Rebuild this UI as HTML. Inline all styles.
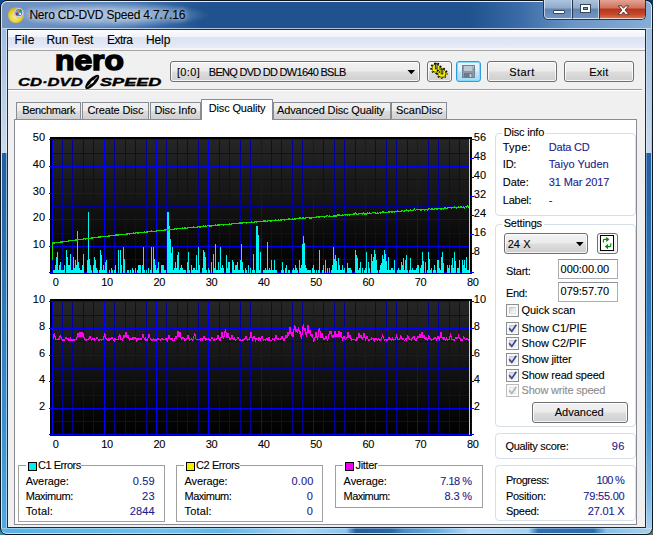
<!DOCTYPE html>
<html><head><meta charset="utf-8"><title>Nero CD-DVD Speed 4.7.7.16</title>
<style>
html,body{margin:0;padding:0;background:#000;}
body{width:653px;height:535px;overflow:hidden;position:relative;font-family:"Liberation Sans",sans-serif;}
#win{position:absolute;left:0;top:0;width:653px;height:535px;overflow:hidden;}
#win div,#win span.t,.abs{position:absolute;}
.t{white-space:nowrap;-webkit-text-stroke:0.1px currentColor;}
#frame{left:0;top:0;width:653px;height:535px;box-sizing:border-box;border:1px solid #10151c;border-radius:7px;background:#20528c;}
#titlebar{left:1px;top:1px;width:651px;height:28px;border-radius:6px 6px 0 0;box-sizing:border-box;border-top:1px solid #e4ecf6;border-left:1px solid #dce6f2;border-right:1px solid #dce6f2;border-bottom:1px solid rgba(225,236,248,0.75);
 background:linear-gradient(90deg,#7394c0 0%,#6a90c2 6%,#4a7ab6 20%,#2c5f9e 27%,#1f528e 31%,#1f528e 72%,#3b6ca8 80%,#6a95c6 88%,#86add6 100%);}
#fl{left:1px;top:29px;width:6px;height:499px;border-left:1px solid #d6e4f3;border-right:1px solid rgba(255,255,255,0.5);box-sizing:border-box;background:linear-gradient(180deg,#9cbde2 0px,#b4cde8 60px,#c9daee 124px,#2160a4 124px,#2464a8 160px,#2f80c0 300px,#3a92d0 400px,#4eaae2 499px);}
#fr{left:646px;top:29px;width:6px;height:499px;border-right:1px solid #a8cbea;border-left:1px solid rgba(255,255,255,0.3);box-sizing:border-box;background:linear-gradient(180deg,#9cbde2 0px,#b4cde8 60px,#c9daee 124px,#2160a4 124px,#2464a8 160px,#2f7cc0 300px,#4a98d4 400px,#7cbae8 470px,#a6cfec 499px);}
#fb{left:1px;top:528px;width:651px;height:6px;border-radius:0 0 6px 6px;border-bottom:1px solid #c4e2f6;border-top:1px solid rgba(255,255,255,0.35);box-sizing:border-box;background:linear-gradient(90deg,#58b2e6 0%,#6fc0ec 25%,#62b6e8 34%,#a6d6f4 46%,#8cc6ee 53%,#24609f 54.5%,#2a68a8 60%,#4a90c8 62%,#6aaee0 67%,#b4daf6 72%,#a4d2f2 81%,#2e70b4 82.5%,#2a6cb0 91%,#86c2ec 93%,#a8d0ec 100%);}
#client{left:7px;top:29px;width:639px;height:499px;box-sizing:border-box;border:1px solid #1c2c44;background:#f0f0f0;}
#menubar{left:8px;top:30px;width:637px;height:21px;background:linear-gradient(180deg,#fbfcfe 0px,#f1f3fa 7px,#dde3f3 7.5px,#e2e7f5 14px,#e9edf8 18px,#f3f5fb 18.5px,#f3f5fb 20px,#a4a4a4 20px,#a4a4a4 21px);}
#capbtns{left:543px;top:0px;width:103px;height:20px;box-sizing:border-box;border:1px solid #2a3444;border-top:none;border-radius:0 0 5px 5px;overflow:hidden;}
#capbtns div{top:0;height:19px;box-sizing:border-box;border:1px solid rgba(255,255,255,0.55);border-top:none;}
#bmin{left:0;width:28px;border-radius:0 0 0 4px;background:linear-gradient(180deg,#aec3dc 0%,#8eaacd 45%,#5f84b2 50%,#7296c2 100%);}
#bmax{left:28px;width:27px;background:linear-gradient(180deg,#aec3dc 0%,#8eaacd 45%,#5f84b2 50%,#7296c2 100%);border-left:1px solid #2a3444 !important;}
#bclose{left:55px;width:47px;border-radius:0 0 4px 0;background:linear-gradient(180deg,#e3a394 0%,#d0705c 45%,#b8341c 50%,#c44a2c 80%,#d8704c 100%);border-left:1px solid #2a3444 !important;}
#bmin i{position:absolute;left:8px;top:10px;width:10px;height:2px;background:#fff;border:1px solid #3a4656;border-radius:1px;}
#bmax i{position:absolute;left:7.5px;top:5px;width:5px;height:3px;border:2.5px solid #fff;outline:1px solid #3a4656;box-shadow:inset 0 0 0 1px #3a4656;}
.btn{box-sizing:border-box;border:1px solid #707070;border-radius:3px;background:linear-gradient(180deg,#f2f2f2 0%,#ebebeb 48%,#dddddd 52%,#cfcfcf 100%);box-shadow:inset 0 0 0 1px rgba(255,255,255,0.8);}
.btn.hot{border-color:#2f9bd8;background:linear-gradient(180deg,#eaf6fd 0%,#d9f0fc 48%,#bee6fd 52%,#a7d9f5 100%);box-shadow:inset 0 0 0 1px #7fdcfb;}
.tab{box-sizing:border-box;border:1px solid #898c95;border-bottom:none;background:linear-gradient(180deg,#f2f2f2 0%,#ebebeb 50%,#dddddd 52%,#cfcfcf 100%);}
.tab.sel{background:#fff;}
.inp{box-sizing:border-box;border:1px solid #abadb3;border-top-color:#8e9098;background:#fff;}
.cb{width:13px;height:13px;box-sizing:border-box;border:1px solid #8e8f8f;background:#f8f8f8;}
.cb::after{content:"";position:absolute;left:2px;top:2px;width:7px;height:7px;box-sizing:border-box;border:1px solid #c6cacf;border-right-color:#e4e6e8;border-bottom-color:#e4e6e8;background:linear-gradient(135deg,#d2d6da 0%,#eceef0 60%,#fbfbfb 100%);}
.cb.dis{border-color:#bcbcbc;background:#fbfbfb;}
.cb.dis::after{border-color:#e6e6e6;background:#f4f4f4;}
</style></head>
<body>
<div id="win">
<div class="abs" style="left:0;top:0;width:10px;height:10px;background:#0a4a9a"></div><div class="abs" style="right:0;top:0;width:10px;height:10px;background:#08386f"></div><div class="abs" style="left:0;bottom:0;width:10px;height:10px;background:#3a8a9a"></div><div class="abs" style="right:0;bottom:0;width:10px;height:10px;background:#6a6a5a"></div>
<div id="frame"></div>
<div id="titlebar"></div>
<div id="fl"></div><div id="fr"></div><div id="fb"></div>
<div id="client"></div>
<svg class="abs" style="left:6px;top:5px" width="20" height="20" viewBox="6 5 20 20">
<defs><radialGradient id="g1" cx="45%" cy="60%" r="60%"><stop offset="0" stop-color="#f6e89a"/><stop offset="0.55" stop-color="#ecd63a"/><stop offset="1" stop-color="#c2a214"/></radialGradient></defs>
<circle cx="16" cy="15" r="8" fill="url(#g1)"/>
<circle cx="18.8" cy="12.7" r="4.7" fill="#e9ecf0" stroke="#a9aeb8" stroke-width="0.7"/>
<circle cx="18.8" cy="12.7" r="3.6" fill="#2a8fe0"/>
<path d="M15.6 13.2 a3.6 3.6 0 0 0 1.6 2.6 l0.8 -2.8 z" fill="#b01010"/>
<path d="M19.6 9.3 a3.6 3.6 0 0 1 2.4 1.8 l-2.2 0.4 z" fill="#1e8a28"/>
<path d="M17 9.8 L20.6 14.6" stroke="#f47a4a" stroke-width="1.3" fill="none"/>
<path d="M16.2 11.8 L19.4 10.4" stroke="#f47a4a" stroke-width="1.1" fill="none"/>
<circle cx="20.2" cy="14" r="0.9" fill="#fff"/>
<circle cx="15.9" cy="11.4" r="0.6" fill="#f8e020"/>
</svg>
<div class="abs" style="left:10px;top:2px;width:200px;height:26px;background:radial-gradient(ellipse 50% 50% at center, rgba(255,255,255,0.42) 0%, rgba(255,255,255,0.34) 50%, rgba(255,255,255,0.10) 85%, rgba(255,255,255,0) 100%);"></div>
<span class="t" style="top:6.54px;font-size:12px;line-height:16px;color:#000;letter-spacing:-0.190px;left:29.40px;text-shadow:0 0 5px rgba(255,255,255,0.75),0 0 8px rgba(255,255,255,0.6);">Nero CD-DVD Speed 4.7.7.16</span>
<div id="capbtns"><div id="bmin"><i></i></div><div id="bmax"><i></i></div><div id="bclose"></div></div>
<svg class="abs" style="left:616.5px;top:4.5px" width="13" height="10.5" viewBox="0 0 14 12" preserveAspectRatio="none"><path d="M1.5 1 L4.8 1 L7 3.8 L9.2 1 L12.5 1 L8.8 5.8 L12.8 11 L9.3 11 L7 8 L4.7 11 L1.2 11 L5.2 5.8 Z" fill="#fff" stroke="#4a2020" stroke-width="0.9"/></svg>
<div id="menubar"></div>
<span class="t" style="top:31.84px;font-size:12px;line-height:16px;color:#000;letter-spacing:0.222px;left:14.40px;">File</span>
<span class="t" style="top:31.84px;font-size:12px;line-height:16px;color:#000;letter-spacing:-0.019px;left:46.40px;">Run Test</span>
<span class="t" style="top:31.84px;font-size:12px;line-height:16px;color:#000;letter-spacing:-0.502px;left:106.90px;">Extra</span>
<span class="t" style="top:31.84px;font-size:12px;line-height:16px;color:#000;letter-spacing:-0.060px;left:145.90px;">Help</span>
<div class="" style="left:8px;top:89px;width:634px;height:1px;background:#a0a0a0"></div>
<div class="" style="left:8px;top:90px;width:634px;height:1px;background:#fff"></div>
<span class="t" style="left:55.30px;top:46.14px;font-size:27px;line-height:31px;font-weight:bold;-webkit-text-stroke:1.5px #000;transform-origin:0 50%;transform:scaleX(1.176);">nero</span>
<span class="t" style="left:18.00px;top:75.12px;font-size:11.2px;line-height:15.2px;font-weight:bold;font-style:italic;-webkit-text-stroke:0.35px #000;transform-origin:0 50%;transform:scaleX(1.487);">CD·DVD</span>
<span class="t" style="left:100.40px;top:75.12px;font-size:11.2px;line-height:15.2px;font-weight:bold;font-style:italic;-webkit-text-stroke:0.35px #000;transform-origin:0 50%;transform:scaleX(1.617);">SPEED</span>
<svg class="abs" style="left:82px;top:72px" width="21" height="20" viewBox="82 72 21 20"><g transform="rotate(45 92.2 81.9)"><ellipse cx="92.2" cy="81.9" rx="3.7" ry="9.3" fill="#050505"/><ellipse cx="92.3" cy="81.9" rx="0.45" ry="7.6" fill="#e8e8e8"/><ellipse cx="92.3" cy="81.9" rx="1.0" ry="2.2" fill="#f4f4f4"/></g></svg>
<div class="btn" style="left:170px;top:61px;width:250px;height:21px;"></div>
<span class="t" style="top:64.69px;font-size:11px;line-height:15px;color:#000;letter-spacing:0.400px;left:176.90px;">[0:0]</span>
<span class="t" style="top:64.69px;font-size:11px;line-height:15px;color:#000;letter-spacing:-0.720px;left:208.80px;">BENQ DVD DD DW1640 BSLB</span>
<svg class="abs" style="left:407.2px;top:70px" width="9" height="5"><path d="M0.5 0 L8.1 0 L4.3 4.3 Z" fill="#000"/></svg>
<div class="btn" style="left:427px;top:61px;width:25px;height:21px;"></div>
<svg class="abs" style="left:427px;top:61px" width="25" height="21" viewBox="427 61 25 21">
<g fill="#f4f000" stroke="#000" stroke-width="0.9">
<circle cx="436" cy="68.2" r="4.1"/><circle cx="441.8" cy="73.2" r="4.1"/></g>
<g fill="none" stroke="#000" stroke-width="1.5" stroke-dasharray="1.6 1.9">
<circle cx="436" cy="68.2" r="5"/><circle cx="441.8" cy="73.2" r="5"/></g>
<g fill="none" stroke="#f4f000" stroke-width="1.1" stroke-dasharray="1.2 2.3" stroke-dashoffset="-0.2">
<circle cx="436" cy="68.2" r="4.6"/><circle cx="441.8" cy="73.2" r="4.6"/></g>
<rect x="435.3" y="63.3" width="1.8" height="5.6" fill="#b0b0b8" stroke="#000" stroke-width="0.7"/>
<rect x="441.1" y="69" width="1.8" height="5" fill="#b0b0b8" stroke="#000" stroke-width="0.7"/>
</svg>
<div class="btn hot" style="left:456px;top:61px;width:25px;height:21px;"></div>
<svg class="abs" style="left:462px;top:65px" width="13" height="13" viewBox="0 0 13 13">
<rect x="0.5" y="0.5" width="12" height="12" fill="#8e9aa8" stroke="#76838f"/>
<rect x="2" y="1" width="8.4" height="5" fill="#bccad6"/><rect x="2" y="8" width="8.4" height="4.5" fill="#6c7a88"/><rect x="7.6" y="9" width="1.8" height="3" fill="#c8d2dc"/><rect x="11" y="1.2" width="1" height="1.2" fill="#dfe6ec"/>
</svg>
<div class="btn" style="left:487px;top:61px;width:70px;height:21px;"></div>
<span class="t" style="top:64.69px;font-size:11px;line-height:15px;color:#000;letter-spacing:0.443px;left:509.20px;">Start</span>
<div class="btn" style="left:564px;top:61px;width:70px;height:21px;"></div>
<span class="t" style="top:64.69px;font-size:11px;line-height:15px;color:#000;letter-spacing:0.288px;left:589.20px;">Exit</span>
<div class="" style="left:14px;top:119px;width:623px;height:406px;background:#fff;border:1px solid #898c95;box-sizing:border-box;"></div>
<div class="tab" style="left:16px;top:102px;width:65px;height:17px;"></div>
<span class="t" style="top:103.19px;font-size:11px;line-height:15px;color:#000;letter-spacing:-0.304px;left:22.20px;">Benchmark</span>
<div class="tab" style="left:82px;top:102px;width:66.5px;height:17px;"></div>
<span class="t" style="top:103.19px;font-size:11px;line-height:15px;color:#000;letter-spacing:-0.146px;left:87.40px;">Create Disc</span>
<div class="tab" style="left:149.5px;top:102px;width:51.5px;height:17px;"></div>
<span class="t" style="top:103.19px;font-size:11px;line-height:15px;color:#000;letter-spacing:-0.099px;left:154.40px;">Disc Info</span>
<div class="tab" style="left:272.5px;top:102px;width:118.5px;height:17px;"></div>
<span class="t" style="top:103.19px;font-size:11px;line-height:15px;color:#000;letter-spacing:-0.153px;left:277.00px;">Advanced Disc Quality</span>
<div class="tab" style="left:391px;top:102px;width:56px;height:17px;"></div>
<span class="t" style="top:103.19px;font-size:11px;line-height:15px;color:#000;letter-spacing:-0.009px;left:396.00px;">ScanDisc</span>
<div class="tab sel" style="left:201px;top:99px;width:72px;height:21px;"></div>
<span class="t" style="top:101.19px;font-size:11px;line-height:15px;color:#000;letter-spacing:-0.171px;left:208.80px;">Disc Quality</span>
<svg class="abs" style="left:0;top:0" width="653" height="535" viewBox="0 0 653 535" shape-rendering="crispEdges">
<defs><linearGradient id="cg" x1="0" y1="0" x2="0" y2="1"><stop offset="0" stop-color="#262626"/><stop offset="1" stop-color="#000"/></linearGradient></defs>
<rect x="50" y="137" width="422" height="137" fill="#000"/>
<rect x="52" y="139" width="418" height="134" fill="url(#cg)"/>
<rect x="62" y="139" width="1" height="134" fill="#00009a"/>
<rect x="72" y="139" width="1" height="134" fill="#00009a"/>
<rect x="83" y="139" width="1" height="134" fill="#00009a"/>
<rect x="93" y="139" width="1" height="134" fill="#00009a"/>
<rect x="114" y="139" width="1" height="134" fill="#00009a"/>
<rect x="125" y="139" width="1" height="134" fill="#00009a"/>
<rect x="135" y="139" width="1" height="134" fill="#00009a"/>
<rect x="146" y="139" width="1" height="134" fill="#00009a"/>
<rect x="166" y="139" width="1" height="134" fill="#00009a"/>
<rect x="177" y="139" width="1" height="134" fill="#00009a"/>
<rect x="187" y="139" width="1" height="134" fill="#00009a"/>
<rect x="198" y="139" width="1" height="134" fill="#00009a"/>
<rect x="219" y="139" width="1" height="134" fill="#00009a"/>
<rect x="229" y="139" width="1" height="134" fill="#00009a"/>
<rect x="240" y="139" width="1" height="134" fill="#00009a"/>
<rect x="250" y="139" width="1" height="134" fill="#00009a"/>
<rect x="271" y="139" width="1" height="134" fill="#00009a"/>
<rect x="281" y="139" width="1" height="134" fill="#00009a"/>
<rect x="292" y="139" width="1" height="134" fill="#00009a"/>
<rect x="302" y="139" width="1" height="134" fill="#00009a"/>
<rect x="323" y="139" width="1" height="134" fill="#00009a"/>
<rect x="334" y="139" width="1" height="134" fill="#00009a"/>
<rect x="344" y="139" width="1" height="134" fill="#00009a"/>
<rect x="355" y="139" width="1" height="134" fill="#00009a"/>
<rect x="375" y="139" width="1" height="134" fill="#00009a"/>
<rect x="386" y="139" width="1" height="134" fill="#00009a"/>
<rect x="396" y="139" width="1" height="134" fill="#00009a"/>
<rect x="407" y="139" width="1" height="134" fill="#00009a"/>
<rect x="428" y="139" width="1" height="134" fill="#00009a"/>
<rect x="438" y="139" width="1" height="134" fill="#00009a"/>
<rect x="449" y="139" width="1" height="134" fill="#00009a"/>
<rect x="459" y="139" width="1" height="134" fill="#00009a"/>
<rect x="52" y="259" width="418" height="1" fill="#00009a"/>
<rect x="52" y="233" width="418" height="1" fill="#00009a"/>
<rect x="52" y="206" width="418" height="1" fill="#00009a"/>
<rect x="52" y="179" width="418" height="1" fill="#00009a"/>
<rect x="52" y="153" width="418" height="1" fill="#00009a"/>
<rect x="52" y="139" width="1" height="134" fill="#0000fa"/>
<rect x="104" y="139" width="1" height="134" fill="#0000fa"/>
<rect x="156" y="139" width="1" height="134" fill="#0000fa"/>
<rect x="208" y="139" width="1" height="134" fill="#0000fa"/>
<rect x="261" y="139" width="1" height="134" fill="#0000fa"/>
<rect x="313" y="139" width="1" height="134" fill="#0000fa"/>
<rect x="365" y="139" width="1" height="134" fill="#0000fa"/>
<rect x="417" y="139" width="1" height="134" fill="#0000fa"/>
<rect x="49" y="272" width="421" height="1" fill="#0000fa"/>
<rect x="49" y="246" width="421" height="1" fill="#0000fa"/>
<rect x="49" y="219" width="421" height="1" fill="#0000fa"/>
<rect x="49" y="193" width="421" height="1" fill="#0000fa"/>
<rect x="49" y="166" width="421" height="1" fill="#0000fa"/>
<rect x="49" y="139" width="421" height="1" fill="#0000fa"/>
<rect x="469" y="139" width="1" height="134" fill="#d0d0d0"/>
<rect x="470" y="139" width="2" height="134" fill="#000"/>
<line x1="471.2" y1="139" x2="471.2" y2="273" stroke="#0000fa" stroke-width="1.2" stroke-dasharray="1 1"/>
<rect x="50" y="299" width="422" height="137" fill="#000"/>
<rect x="52" y="301" width="418" height="134" fill="url(#cg)"/>
<rect x="62" y="301" width="1" height="134" fill="#00009a"/>
<rect x="72" y="301" width="1" height="134" fill="#00009a"/>
<rect x="83" y="301" width="1" height="134" fill="#00009a"/>
<rect x="93" y="301" width="1" height="134" fill="#00009a"/>
<rect x="114" y="301" width="1" height="134" fill="#00009a"/>
<rect x="125" y="301" width="1" height="134" fill="#00009a"/>
<rect x="135" y="301" width="1" height="134" fill="#00009a"/>
<rect x="146" y="301" width="1" height="134" fill="#00009a"/>
<rect x="166" y="301" width="1" height="134" fill="#00009a"/>
<rect x="177" y="301" width="1" height="134" fill="#00009a"/>
<rect x="187" y="301" width="1" height="134" fill="#00009a"/>
<rect x="198" y="301" width="1" height="134" fill="#00009a"/>
<rect x="219" y="301" width="1" height="134" fill="#00009a"/>
<rect x="229" y="301" width="1" height="134" fill="#00009a"/>
<rect x="240" y="301" width="1" height="134" fill="#00009a"/>
<rect x="250" y="301" width="1" height="134" fill="#00009a"/>
<rect x="271" y="301" width="1" height="134" fill="#00009a"/>
<rect x="281" y="301" width="1" height="134" fill="#00009a"/>
<rect x="292" y="301" width="1" height="134" fill="#00009a"/>
<rect x="302" y="301" width="1" height="134" fill="#00009a"/>
<rect x="323" y="301" width="1" height="134" fill="#00009a"/>
<rect x="334" y="301" width="1" height="134" fill="#00009a"/>
<rect x="344" y="301" width="1" height="134" fill="#00009a"/>
<rect x="355" y="301" width="1" height="134" fill="#00009a"/>
<rect x="375" y="301" width="1" height="134" fill="#00009a"/>
<rect x="386" y="301" width="1" height="134" fill="#00009a"/>
<rect x="396" y="301" width="1" height="134" fill="#00009a"/>
<rect x="407" y="301" width="1" height="134" fill="#00009a"/>
<rect x="428" y="301" width="1" height="134" fill="#00009a"/>
<rect x="438" y="301" width="1" height="134" fill="#00009a"/>
<rect x="449" y="301" width="1" height="134" fill="#00009a"/>
<rect x="459" y="301" width="1" height="134" fill="#00009a"/>
<rect x="52" y="421" width="418" height="1" fill="#00009a"/>
<rect x="52" y="395" width="418" height="1" fill="#00009a"/>
<rect x="52" y="368" width="418" height="1" fill="#00009a"/>
<rect x="52" y="341" width="418" height="1" fill="#00009a"/>
<rect x="52" y="315" width="418" height="1" fill="#00009a"/>
<rect x="52" y="301" width="1" height="134" fill="#0000fa"/>
<rect x="104" y="301" width="1" height="134" fill="#0000fa"/>
<rect x="156" y="301" width="1" height="134" fill="#0000fa"/>
<rect x="208" y="301" width="1" height="134" fill="#0000fa"/>
<rect x="261" y="301" width="1" height="134" fill="#0000fa"/>
<rect x="313" y="301" width="1" height="134" fill="#0000fa"/>
<rect x="365" y="301" width="1" height="134" fill="#0000fa"/>
<rect x="417" y="301" width="1" height="134" fill="#0000fa"/>
<rect x="49" y="434" width="421" height="1" fill="#0000fa"/>
<rect x="49" y="408" width="421" height="1" fill="#0000fa"/>
<rect x="49" y="381" width="421" height="1" fill="#0000fa"/>
<rect x="49" y="355" width="421" height="1" fill="#0000fa"/>
<rect x="49" y="328" width="421" height="1" fill="#0000fa"/>
<rect x="49" y="301" width="421" height="1" fill="#0000fa"/>
<rect x="469" y="301" width="1" height="134" fill="#d0d0d0"/>
<rect x="470" y="301" width="2" height="134" fill="#000"/>
<line x1="471.2" y1="301" x2="471.2" y2="435" stroke="#0000fa" stroke-width="1.2" stroke-dasharray="1 1"/>
<rect x="470" y="272" width="4" height="1" fill="#0000fa"/>
<rect x="470" y="253" width="4" height="1" fill="#0000fa"/>
<rect x="470" y="234" width="4" height="1" fill="#0000fa"/>
<rect x="470" y="215" width="4" height="1" fill="#0000fa"/>
<rect x="470" y="196" width="4" height="1" fill="#0000fa"/>
<rect x="470" y="177" width="4" height="1" fill="#0000fa"/>
<rect x="470" y="158" width="4" height="1" fill="#0000fa"/>
<rect x="470" y="139" width="4" height="1" fill="#0000fa"/>
<rect x="470" y="434" width="4" height="1" fill="#0000fa"/>
<rect x="470" y="408" width="4" height="1" fill="#0000fa"/>
<rect x="470" y="381" width="4" height="1" fill="#0000fa"/>
<rect x="470" y="355" width="4" height="1" fill="#0000fa"/>
<rect x="470" y="328" width="4" height="1" fill="#0000fa"/>
<rect x="470" y="301" width="4" height="1" fill="#0000fa"/>
<path d="M53 270h1v3h-1zM54 270h1v3h-1zM55 265h1v8h-1zM56 257h1v16h-1zM57 251.5h1v21.5h-1zM58 270h1v3h-1zM59 265h1v8h-1zM60 262h1v11h-1zM61 270h1v3h-1zM62 270h1v3h-1zM63 270h1v3h-1zM64 265h1v8h-1zM66 250h1v23h-1zM67 257h1v16h-1zM68 265h1v8h-1zM69 265h1v8h-1zM70 254h1v19h-1zM71 270h1v3h-1zM72 270h1v3h-1zM73 257h1v16h-1zM74 268h1v5h-1zM75 260h1v13h-1zM76 265h1v8h-1zM77 231h1v42h-1zM78 262h1v11h-1zM79 268h1v5h-1zM80 270h1v3h-1zM81 270h1v3h-1zM82 265h1v8h-1zM83 254h1v19h-1zM87 260h1v13h-1zM88 212h1v61h-1zM89 259h1v14h-1zM90 265h1v8h-1zM91 270h1v3h-1zM93 265h1v8h-1zM94 257h1v16h-1zM95 260h1v13h-1zM96 268h1v5h-1zM97 270h1v3h-1zM99 270h1v3h-1zM100 250h1v23h-1zM101 255h1v18h-1zM102 270h1v3h-1zM103 265h1v8h-1zM104 270h1v3h-1zM105 262h1v11h-1zM106 260h1v13h-1zM109 270h1v3h-1zM111 268h1v5h-1zM112 270h1v3h-1zM114 270h1v3h-1zM115 265h1v8h-1zM118 250h1v23h-1zM120 250h1v23h-1zM121 265h1v8h-1zM123 247h1v26h-1zM124 259h1v14h-1zM127 270h1v3h-1zM128 270h1v3h-1zM130 270h1v3h-1zM132 268h1v5h-1zM133 270h1v3h-1zM135 268h1v5h-1zM137 270h1v3h-1zM138 265h1v8h-1zM139 265h1v8h-1zM140 265h1v8h-1zM142 265h1v8h-1zM143 247h1v26h-1zM144 270h1v3h-1zM146 270h1v3h-1zM148 268h1v5h-1zM150 270h1v3h-1zM151 247h1v26h-1zM153 247h1v26h-1zM154 259h1v14h-1zM155 265h1v8h-1zM156 270h1v3h-1zM157 268h1v5h-1zM158 262h1v11h-1zM161 265h1v8h-1zM162 265h1v8h-1zM163 265h1v8h-1zM164 270h1v3h-1zM165 270h1v3h-1zM167 212h1v61h-1zM168 212h1v61h-1zM169 226h1v47h-1zM170 239h1v34h-1zM171 253h1v20h-1zM172 247h1v26h-1zM173 270h1v3h-1zM174 268h1v5h-1zM175 262h1v11h-1zM176 268h1v5h-1zM177 255h1v18h-1zM178 252h1v21h-1zM179 270h1v3h-1zM180 268h1v5h-1zM181 265h1v8h-1zM182 268h1v5h-1zM183 270h1v3h-1zM184 270h1v3h-1zM185 270h1v3h-1zM187 262h1v11h-1zM188 252h1v21h-1zM189 270h1v3h-1zM191 265h1v8h-1zM192 270h1v3h-1zM193 268h1v5h-1zM194 268h1v5h-1zM195 270h1v3h-1zM196 255h1v18h-1zM197 270h1v3h-1zM198 247h1v26h-1zM199 265h1v8h-1zM202 268h1v5h-1zM203 250h1v23h-1zM204 252h1v21h-1zM205 257h1v16h-1zM206 270h1v3h-1zM208 268h1v5h-1zM209 270h1v3h-1zM211 262h1v11h-1zM213 254h1v19h-1zM214 268h1v5h-1zM215 244h1v29h-1zM216 270h1v3h-1zM217 270h1v3h-1zM218 262h1v11h-1zM219 270h1v3h-1zM220 247h1v26h-1zM221 268h1v5h-1zM222 265h1v8h-1zM223 268h1v5h-1zM226 255h1v18h-1zM227 268h1v5h-1zM228 262h1v11h-1zM229 262h1v11h-1zM232 260h1v13h-1zM233 262h1v11h-1zM234 270h1v3h-1zM235 265h1v8h-1zM236 265h1v8h-1zM237 262h1v11h-1zM238 270h1v3h-1zM239 270h1v3h-1zM240 260h1v13h-1zM241 244h1v29h-1zM242 262h1v11h-1zM243 270h1v3h-1zM245 268h1v5h-1zM246 270h1v3h-1zM248 265h1v8h-1zM250 268h1v5h-1zM252 270h1v3h-1zM253 254h1v19h-1zM254 270h1v3h-1zM256 226h1v47h-1zM257 226h1v47h-1zM258 235h1v38h-1zM259 270h1v3h-1zM260 252h1v21h-1zM263 270h1v3h-1zM264 270h1v3h-1zM265 268h1v5h-1zM266 270h1v3h-1zM267 242h1v31h-1zM268 270h1v3h-1zM269 268h1v5h-1zM270 270h1v3h-1zM271 260h1v13h-1zM272 270h1v3h-1zM273 270h1v3h-1zM274 260h1v13h-1zM275 270h1v3h-1zM276 270h1v3h-1zM281 270h1v3h-1zM282 262h1v11h-1zM283 270h1v3h-1zM285 268h1v5h-1zM286 265h1v8h-1zM288 270h1v3h-1zM289 270h1v3h-1zM292 270h1v3h-1zM293 268h1v5h-1zM294 270h1v3h-1zM295 265h1v8h-1zM296 268h1v5h-1zM297 270h1v3h-1zM299 260h1v13h-1zM300 268h1v5h-1zM301 265h1v8h-1zM302 244h1v29h-1zM303 236h1v37h-1zM304 243h1v30h-1zM305 265h1v8h-1zM306 268h1v5h-1zM307 270h1v3h-1zM308 270h1v3h-1zM309 270h1v3h-1zM310 270h1v3h-1zM312 268h1v5h-1zM313 265h1v8h-1zM314 270h1v3h-1zM316 270h1v3h-1zM318 270h1v3h-1zM319 250h1v23h-1zM322 270h1v3h-1zM323 265h1v8h-1zM325 260h1v13h-1zM327 268h1v5h-1zM329 268h1v5h-1zM331 270h1v3h-1zM332 265h1v8h-1zM333 247h1v26h-1zM334 259h1v14h-1zM335 255h1v18h-1zM336 261h1v12h-1zM337 270h1v3h-1zM338 258h1v15h-1zM339 265h1v8h-1zM340 270h1v3h-1zM341 270h1v3h-1zM342 265h1v8h-1zM343 270h1v3h-1zM344 268h1v5h-1zM347 263h1v10h-1zM348 268h1v5h-1zM349 268h1v5h-1zM350 268h1v5h-1zM351 270h1v3h-1zM355 250h1v23h-1zM356 255h1v18h-1zM357 258h1v15h-1zM358 270h1v3h-1zM359 268h1v5h-1zM360 262h1v11h-1zM362 268h1v5h-1zM364 270h1v3h-1zM365 268h1v5h-1zM366 252h1v21h-1zM368 262h1v11h-1zM369 268h1v5h-1zM371 254h1v19h-1zM372 261h1v12h-1zM373 257h1v16h-1zM374 250h1v23h-1zM375 254h1v19h-1zM376 260h1v13h-1zM377 270h1v3h-1zM379 270h1v3h-1zM380 265h1v8h-1zM381 263h1v10h-1zM382 255h1v18h-1zM383 259h1v14h-1zM384 250h1v23h-1zM385 254h1v19h-1zM386 261h1v12h-1zM387 270h1v3h-1zM388 257h1v16h-1zM389 270h1v3h-1zM390 270h1v3h-1zM391 268h1v5h-1zM392 268h1v5h-1zM393 270h1v3h-1zM394 260h1v13h-1zM397 270h1v3h-1zM398 268h1v5h-1zM399 270h1v3h-1zM400 270h1v3h-1zM401 262h1v11h-1zM402 265h1v8h-1zM403 258h1v15h-1zM404 270h1v3h-1zM405 260h1v13h-1zM406 255h1v18h-1zM407 270h1v3h-1zM409 270h1v3h-1zM410 258h1v15h-1zM411 270h1v3h-1zM412 268h1v5h-1zM413 270h1v3h-1zM414 270h1v3h-1zM415 270h1v3h-1zM416 268h1v5h-1zM417 265h1v8h-1zM418 265h1v8h-1zM420 268h1v5h-1zM421 265h1v8h-1zM422 252h1v21h-1zM423 261h1v12h-1zM425 262h1v11h-1zM427 270h1v3h-1zM428 252h1v21h-1zM429 259h1v14h-1zM430 270h1v3h-1zM431 268h1v5h-1zM433 270h1v3h-1zM434 265h1v8h-1zM435 270h1v3h-1zM437 260h1v13h-1zM438 260h1v13h-1zM439 268h1v5h-1zM440 270h1v3h-1zM441 257h1v16h-1zM442 252h1v21h-1zM443 263h1v10h-1zM447 265h1v8h-1zM448 268h1v5h-1zM449 265h1v8h-1zM451 265h1v8h-1zM452 258h1v15h-1zM453 268h1v5h-1zM454 252h1v21h-1zM455 261h1v12h-1zM457 268h1v5h-1zM458 268h1v5h-1zM459 260h1v13h-1zM462 260h1v13h-1zM463 265h1v8h-1zM464 260h1v13h-1zM465 268h1v5h-1zM466 257h1v16h-1zM467 270h1v3h-1zM468 270h1v3h-1z" fill="#00f4f4"/>
<polyline fill="none" stroke="#10e000" stroke-width="1.3" shape-rendering="crispEdges" points="52.5,260.0 52.5,243.1 53.5,243.0 54.5,243.0 55.5,242.6 56.5,242.5 57.5,242.6 58.5,242.4 59.5,242.2 60.5,242.1 61.5,241.9 62.5,241.9 63.5,241.7 64.5,241.4 65.5,241.5 66.5,241.3 67.5,241.2 68.5,240.9 69.5,240.8 70.5,240.8 71.5,240.4 72.5,240.6 73.5,240.3 74.5,240.2 75.5,240.0 76.5,239.9 77.5,239.9 78.5,239.8 79.5,239.6 80.5,239.5 81.5,239.4 82.5,239.2 83.5,239.2 84.5,238.7 85.5,238.9 86.5,238.5 87.5,238.5 88.5,238.3 89.5,238.6 90.5,238.3 91.5,238.1 92.5,238.1 93.5,237.8 94.5,237.5 95.5,237.6 96.5,237.3 97.5,237.4 98.5,237.0 99.5,237.0 100.5,237.1 101.5,236.8 102.5,236.8 103.5,236.6 104.5,236.7 105.5,236.4 106.5,236.2 107.5,236.4 108.5,236.1 109.5,235.9 110.5,235.6 111.5,235.8 112.5,235.6 113.5,235.5 114.5,235.4 115.5,234.8 116.5,235.2 117.5,234.9 118.5,235.0 119.5,234.7 120.5,234.6 121.5,234.5 122.5,234.7 123.5,234.4 124.5,234.2 125.5,234.3 126.5,233.9 127.5,234.0 128.5,233.7 129.5,233.9 130.5,233.8 131.5,233.4 132.5,233.6 133.5,233.1 134.5,233.2 135.5,233.2 136.5,232.8 137.5,233.0 138.5,232.9 139.5,232.5 140.5,232.7 141.5,232.4 142.5,232.3 143.5,232.4 144.5,231.9 145.5,232.2 146.5,231.9 147.5,232.0 148.5,231.8 149.5,231.7 150.5,231.4 151.5,231.1 152.5,231.4 153.5,231.6 154.5,231.3 155.5,231.2 156.5,231.1 157.5,230.5 158.5,230.5 159.5,230.7 160.5,230.5 161.5,230.5 162.5,230.2 163.5,230.2 164.5,230.0 165.5,230.0 166.5,229.7 167.5,230.1 168.5,230.1 169.5,229.7 170.5,229.3 171.5,229.3 172.5,229.3 173.5,229.6 174.5,228.9 175.5,228.5 176.5,229.2 177.5,228.6 178.5,228.6 179.5,228.6 180.5,228.6 181.5,228.3 182.5,228.1 183.5,228.4 184.5,227.9 185.5,228.0 186.5,228.2 187.5,228.1 188.5,227.8 189.5,227.7 190.5,227.6 191.5,227.5 192.5,227.5 193.5,227.1 194.5,227.2 195.5,227.4 196.5,227.3 197.5,226.8 198.5,226.6 199.5,226.9 200.5,226.9 201.5,226.8 202.5,226.3 203.5,226.1 204.5,226.7 205.5,226.0 206.5,226.4 207.5,225.7 208.5,225.7 209.5,226.0 210.5,226.1 211.5,226.2 212.5,225.8 213.5,225.7 214.5,225.6 215.5,225.0 216.5,225.3 217.5,225.0 218.5,224.9 219.5,225.2 220.5,224.8 221.5,224.7 222.5,224.4 223.5,225.0 224.5,224.7 225.5,224.6 226.5,224.5 227.5,224.3 228.5,224.5 229.5,223.8 230.5,224.3 231.5,223.9 232.5,223.6 233.5,223.6 234.5,223.6 235.5,223.8 236.5,223.4 237.5,223.4 238.5,223.4 239.5,222.8 240.5,223.2 241.5,222.9 242.5,222.9 243.5,222.7 244.5,222.8 245.5,222.7 246.5,222.9 247.5,222.6 248.5,222.8 249.5,222.6 250.5,222.3 251.5,222.1 252.5,222.3 253.5,222.4 254.5,221.8 255.5,221.7 256.5,222.1 257.5,221.6 258.5,221.5 259.5,221.8 260.5,221.2 261.5,221.3 262.5,221.4 263.5,220.9 264.5,221.1 265.5,220.9 266.5,221.4 267.5,221.0 268.5,220.7 269.5,220.5 270.5,221.0 271.5,221.0 272.5,220.8 273.5,220.3 274.5,220.5 275.5,220.1 276.5,220.6 277.5,220.2 278.5,220.1 279.5,220.2 280.5,220.0 281.5,220.0 282.5,219.5 283.5,219.8 284.5,220.0 285.5,219.4 286.5,219.5 287.5,219.5 288.5,219.1 289.5,218.8 290.5,219.3 291.5,219.3 292.5,218.8 293.5,219.6 294.5,218.8 295.5,219.0 296.5,218.5 297.5,218.6 298.5,218.4 299.5,218.1 300.5,218.0 301.5,218.5 302.5,217.9 303.5,218.0 304.5,218.3 305.5,218.1 306.5,217.8 307.5,217.8 308.5,217.5 309.5,218.2 310.5,217.9 311.5,217.9 312.5,217.5 313.5,217.5 314.5,217.5 315.5,217.5 316.5,217.2 317.5,216.6 318.5,217.1 319.5,216.9 320.5,216.5 321.5,216.3 322.5,216.8 323.5,216.7 324.5,216.9 325.5,216.7 326.5,216.0 327.5,215.7 328.5,216.3 329.5,216.0 330.5,216.3 331.5,216.4 332.5,216.4 333.5,216.1 334.5,216.1 335.5,216.1 336.5,215.9 337.5,214.7 338.5,215.1 339.5,215.1 340.5,215.6 341.5,215.2 342.5,215.0 343.5,215.4 344.5,214.7 345.5,215.2 346.5,214.8 347.5,214.9 348.5,214.3 349.5,215.0 350.5,214.6 351.5,214.3 352.5,214.4 353.5,213.9 354.5,214.0 355.5,213.3 356.5,214.1 357.5,214.6 358.5,214.0 359.5,213.5 360.5,213.6 361.5,213.8 362.5,213.9 363.5,212.8 364.5,213.9 365.5,213.9 366.5,213.9 367.5,213.2 368.5,213.7 369.5,213.1 370.5,213.4 371.5,213.4 372.5,212.6 373.5,212.2 374.5,212.4 375.5,213.3 376.5,213.3 377.5,213.0 378.5,213.7 379.5,212.4 380.5,213.0 381.5,212.2 382.5,211.9 383.5,212.1 384.5,212.7 385.5,212.4 386.5,212.5 387.5,212.5 388.5,211.9 389.5,212.2 390.5,211.6 391.5,212.0 392.5,211.9 393.5,211.6 394.5,212.1 395.5,211.4 396.5,211.6 397.5,211.0 398.5,211.4 399.5,211.6 400.5,211.6 401.5,210.9 402.5,210.5 403.5,211.5 404.5,210.9 405.5,210.3 406.5,210.1 407.5,210.3 408.5,210.8 409.5,210.2 410.5,210.1 411.5,210.3 412.5,210.4 413.5,210.3 414.5,209.4 415.5,210.5 416.5,209.5 417.5,209.6 418.5,209.4 419.5,209.5 420.5,209.9 421.5,210.0 422.5,209.5 423.5,209.5 424.5,209.9 425.5,209.8 426.5,209.4 427.5,209.9 428.5,209.1 429.5,208.7 430.5,209.4 431.5,209.2 432.5,208.7 433.5,209.5 434.5,208.8 435.5,208.5 436.5,209.3 437.5,209.1 438.5,208.7 439.5,208.6 440.5,209.0 441.5,209.0 442.5,208.7 443.5,208.9 444.5,208.0 445.5,207.8 446.5,208.4 447.5,208.0 448.5,207.4 449.5,207.6 450.5,207.6 451.5,208.1 452.5,207.2 453.5,207.4 454.5,207.1 455.5,207.8 456.5,208.1 457.5,207.2 458.5,207.1 459.5,207.3 460.5,207.0 461.5,206.9 462.5,207.6 463.5,206.7 464.5,207.8 465.5,206.4 466.5,206.9 467.5,206.2 468.5,207.0 469.5,207.2"/>
<polyline fill="none" stroke="#ff00f0" stroke-width="1.15" shape-rendering="crispEdges" points="52.5,339.2 53.0,339.0 53.5,336.8 54.0,334.6 54.5,334.2 55.0,336.4 55.5,338.6 56.0,339.3 56.5,339.2 57.0,339.1 57.5,339.7 58.0,339.9 58.5,338.9 59.0,339.4 59.5,337.8 60.0,336.2 60.5,335.9 61.0,337.5 61.5,339.1 62.0,339.3 62.5,340.2 63.0,340.2 63.5,340.0 64.0,340.2 64.5,340.1 65.0,339.2 65.5,338.2 66.0,337.3 66.5,338.2 67.0,339.2 67.5,339.0 68.0,340.1 68.5,339.0 69.0,340.3 69.5,339.6 70.0,340.1 70.5,337.3 71.0,340.3 71.5,339.5 72.0,339.1 72.5,340.0 73.0,339.7 73.5,340.2 74.0,340.0 74.5,340.2 75.0,339.4 75.5,339.8 76.0,339.6 76.5,338.6 77.0,337.7 77.5,335.5 78.0,333.3 78.5,335.5 79.0,337.3 79.5,334.8 80.0,332.3 80.5,334.8 81.0,337.3 81.5,334.8 82.0,332.3 82.5,334.8 83.0,333.3 83.5,335.5 84.0,337.7 84.5,339.8 85.0,339.8 85.5,340.0 86.0,340.1 86.5,340.1 87.0,339.8 87.5,339.4 88.0,339.9 88.5,339.8 89.0,338.8 89.5,337.6 90.0,336.3 90.5,337.6 91.0,338.8 91.5,340.1 92.0,339.6 92.5,338.7 93.0,340.0 93.5,339.7 94.0,338.5 94.5,340.1 95.0,339.4 95.5,339.5 96.0,339.2 96.5,338.1 97.0,337.3 97.5,338.2 98.0,339.2 98.5,340.1 99.0,339.5 99.5,340.2 100.0,340.0 100.5,339.3 101.0,339.7 101.5,340.2 102.0,339.1 102.5,339.6 103.0,339.6 103.5,338.6 104.0,336.4 104.5,334.2 105.0,334.6 105.5,336.8 106.0,339.0 106.5,338.9 107.0,339.4 107.5,340.3 108.0,339.7 108.5,340.2 109.0,338.2 109.5,339.6 110.0,338.2 110.5,339.4 111.0,339.2 111.5,338.2 112.0,337.3 112.5,338.1 113.0,339.2 113.5,340.1 114.0,338.9 114.5,340.2 115.0,338.6 115.5,339.7 116.0,339.9 116.5,339.7 117.0,339.0 117.5,339.7 118.0,340.0 118.5,338.7 119.0,336.9 119.5,335.1 120.0,335.4 120.5,337.3 121.0,339.2 121.5,339.6 122.0,340.2 122.5,340.0 123.0,338.4 123.5,336.9 124.0,335.3 124.5,336.9 125.0,337.1 125.5,334.5 126.0,331.8 126.5,334.5 127.0,337.1 127.5,336.9 128.0,335.3 128.5,336.9 129.0,338.4 129.5,338.3 130.0,340.1 130.5,339.6 131.0,338.1 131.5,339.0 132.0,340.1 132.5,338.9 133.0,340.1 133.5,338.9 134.0,337.2 134.5,338.2 135.0,337.3 135.5,338.2 136.0,338.4 136.5,340.1 137.0,338.9 137.5,339.8 138.0,338.4 138.5,339.5 139.0,339.2 139.5,338.8 140.0,339.2 140.5,338.9 141.0,339.5 141.5,339.5 142.0,338.1 142.5,336.2 143.0,334.3 143.5,336.2 144.0,338.1 144.5,339.2 145.0,339.7 145.5,338.4 146.0,340.2 146.5,340.2 147.0,339.4 147.5,339.9 148.0,338.1 148.5,336.2 149.0,334.3 149.5,336.2 150.0,338.1 150.5,339.1 151.0,340.1 151.5,339.7 152.0,340.2 152.5,340.0 153.0,339.3 153.5,338.8 154.0,339.0 154.5,340.3 155.0,340.2 155.5,339.9 156.0,339.0 156.5,340.1 157.0,339.6 157.5,338.9 158.0,338.3 158.5,338.5 159.0,339.6 159.5,339.7 160.0,339.1 160.5,340.0 161.0,339.4 161.5,339.6 162.0,338.4 162.5,339.7 163.0,339.7 163.5,339.6 164.0,339.9 164.5,339.6 165.0,339.5 165.5,339.4 166.0,338.8 166.5,339.8 167.0,338.2 167.5,340.0 168.0,338.4 168.5,336.9 169.0,335.3 169.5,336.9 170.0,338.4 170.5,339.6 171.0,339.6 171.5,339.6 172.0,338.7 172.5,339.3 173.0,340.2 173.5,340.1 174.0,340.2 174.5,340.1 175.0,338.8 175.5,337.6 176.0,336.3 176.5,337.6 177.0,336.9 177.5,334.1 178.0,331.3 178.5,334.1 179.0,336.9 179.5,334.8 180.0,332.3 180.5,334.8 181.0,337.3 181.5,339.6 182.0,339.2 182.5,338.2 183.0,337.3 183.5,338.2 184.0,338.2 184.5,340.1 185.0,339.7 185.5,339.7 186.0,340.2 186.5,339.3 187.0,338.4 187.5,336.9 188.0,335.3 188.5,336.9 189.0,338.4 189.5,339.9 190.0,339.3 190.5,339.2 191.0,339.3 191.5,339.0 192.0,339.3 192.5,340.0 193.0,340.1 193.5,338.4 194.0,336.1 194.5,333.7 195.0,334.2 195.5,336.6 196.0,338.9 196.5,339.5 197.0,339.5 197.5,339.1 198.0,339.2 198.5,339.4 199.0,340.0 199.5,339.9 200.0,339.8 200.5,340.0 201.0,338.7 201.5,339.4 202.0,339.2 202.5,339.9 203.0,338.4 203.5,337.6 204.0,336.3 204.5,337.6 205.0,338.8 205.5,339.5 206.0,338.5 206.5,339.8 207.0,339.6 207.5,339.5 208.0,339.8 208.5,338.8 209.0,339.8 209.5,340.1 210.0,340.3 210.5,340.1 211.0,339.2 211.5,338.2 212.0,337.3 212.5,338.2 213.0,338.9 213.5,340.0 214.0,339.9 214.5,338.9 215.0,340.2 215.5,339.6 216.0,339.1 216.5,339.3 217.0,338.4 217.5,336.9 218.0,335.3 218.5,336.9 219.0,338.4 219.5,339.9 220.0,338.9 220.5,339.6 221.0,337.3 221.5,334.8 222.0,332.3 222.5,334.8 223.0,337.3 223.5,339.2 224.0,336.9 224.5,334.0 225.0,331.1 225.5,329.4 226.0,332.2 226.5,335.1 227.0,337.7 227.5,335.5 228.0,333.3 228.5,335.5 229.0,337.7 229.5,339.2 230.0,340.1 230.5,339.0 231.0,338.4 231.5,336.9 232.0,335.3 232.5,336.9 233.0,338.4 233.5,339.4 234.0,340.1 234.5,338.3 235.0,339.8 235.5,340.2 236.0,339.3 236.5,339.6 237.0,339.2 237.5,338.2 238.0,337.3 238.5,338.2 239.0,339.2 239.5,339.9 240.0,339.1 240.5,339.9 241.0,340.1 241.5,340.3 242.0,340.1 242.5,340.1 243.0,339.7 243.5,340.0 244.0,339.6 244.5,339.5 245.0,338.8 245.5,337.6 246.0,336.3 246.5,337.6 247.0,338.8 247.5,340.1 248.0,339.7 248.5,339.4 249.0,340.1 249.5,339.6 250.0,337.3 250.5,334.8 251.0,332.3 251.5,334.8 252.0,337.3 252.5,339.6 253.0,338.8 253.5,337.6 254.0,336.3 254.5,337.6 255.0,338.8 255.5,340.1 256.0,338.7 256.5,339.7 257.0,339.8 257.5,339.5 258.0,338.4 258.5,339.7 259.0,337.1 259.5,339.9 260.0,340.0 260.5,340.1 261.0,338.8 261.5,337.6 262.0,336.3 262.5,337.6 263.0,338.8 263.5,340.1 264.0,339.8 264.5,339.2 265.0,339.5 265.5,339.7 266.0,340.2 266.5,339.5 267.0,338.5 267.5,339.9 268.0,340.2 268.5,338.8 269.0,340.2 269.5,338.9 270.0,340.3 270.5,340.2 271.0,340.0 271.5,340.1 272.0,340.1 272.5,339.3 273.0,340.0 273.5,339.8 274.0,340.1 274.5,340.0 275.0,338.4 275.5,336.9 276.0,335.3 276.5,336.9 277.0,338.4 277.5,338.3 278.0,339.5 278.5,338.8 279.0,339.9 279.5,339.8 280.0,339.4 280.5,339.4 281.0,338.8 281.5,337.6 282.0,336.3 282.5,337.6 283.0,338.6 283.5,339.9 284.0,339.4 284.5,340.0 285.0,338.4 285.5,336.9 286.0,335.3 286.5,336.9 287.0,337.3 287.5,334.8 288.0,332.3 288.5,334.8 289.0,333.8 289.5,330.6 290.0,327.3 290.5,330.6 291.0,333.8 291.5,334.8 292.0,332.3 292.5,334.8 293.0,337.3 293.5,333.9 294.0,329.9 294.5,325.9 295.0,326.7 295.5,330.7 296.0,332.1 296.5,329.3 297.0,332.1 297.5,332.6 298.0,329.1 298.5,327.0 299.0,330.5 299.5,334.0 300.0,331.3 300.5,334.1 301.0,336.9 301.5,338.7 302.0,334.5 302.5,330.4 303.0,326.3 303.5,325.4 304.0,329.6 304.5,331.3 305.0,328.3 305.5,331.3 306.0,334.3 306.5,336.4 307.0,332.6 307.5,328.7 308.0,324.8 308.5,328.7 309.0,332.6 309.5,332.8 310.0,330.3 310.5,332.8 311.0,335.3 311.5,336.2 312.0,334.3 312.5,336.2 313.0,338.1 313.5,339.9 314.0,338.3 314.5,339.3 315.0,337.3 315.5,334.8 316.0,332.3 316.5,334.8 317.0,337.3 317.5,339.6 318.0,336.4 318.5,333.1 319.0,329.9 319.5,328.0 320.0,331.2 320.5,334.5 321.0,337.7 321.5,335.5 322.0,333.3 322.5,335.5 323.0,337.7 323.5,339.4 324.0,340.0 324.5,339.1 325.0,338.8 325.5,337.6 326.0,336.3 326.5,337.6 327.0,338.8 327.5,340.0 328.0,338.9 328.5,336.9 329.0,334.1 329.5,331.3 330.0,334.1 330.5,333.8 331.0,330.8 331.5,333.8 332.0,336.7 332.5,336.9 333.0,335.3 333.5,336.9 334.0,336.7 334.5,333.8 335.0,330.8 335.5,333.8 336.0,336.7 336.5,336.2 337.0,334.3 337.5,336.2 338.0,336.7 338.5,333.8 339.0,330.8 339.5,333.8 340.0,336.7 340.5,334.8 341.0,332.3 341.5,334.8 342.0,337.3 342.5,339.8 343.0,338.8 343.5,337.6 344.0,336.3 344.5,337.6 345.0,338.8 345.5,339.6 346.0,340.1 346.5,339.5 347.0,337.1 347.5,334.5 348.0,331.8 348.5,334.5 349.0,337.1 349.5,336.9 350.0,335.3 350.5,336.9 351.0,338.4 351.5,340.0 352.0,339.1 352.5,339.8 353.0,339.7 353.5,339.8 354.0,339.2 354.5,339.2 355.0,339.6 355.5,340.3 356.0,339.7 356.5,340.3 357.0,337.8 357.5,338.7 358.0,337.5 358.5,335.1 359.0,332.8 359.5,335.1 360.0,337.5 360.5,336.9 361.0,335.3 361.5,336.9 362.0,338.4 362.5,339.1 363.0,337.5 363.5,335.1 364.0,332.8 364.5,335.1 365.0,337.5 365.5,339.8 366.0,338.8 366.5,337.6 367.0,336.3 367.5,337.6 368.0,338.8 368.5,339.8 369.0,339.1 369.5,340.2 370.0,339.7 370.5,339.7 371.0,339.4 371.5,338.6 372.0,337.8 372.5,338.6 373.0,338.1 373.5,339.8 374.0,339.3 374.5,340.3 375.0,338.3 375.5,339.5 376.0,339.9 376.5,338.8 377.0,339.2 377.5,340.0 378.0,340.1 378.5,339.3 379.0,339.9 379.5,340.0 380.0,339.6 380.5,340.2 381.0,339.9 381.5,338.7 382.0,337.2 382.5,335.6 383.0,336.5 383.5,338.1 384.0,338.9 384.5,340.2 385.0,339.8 385.5,339.4 386.0,339.2 386.5,340.0 387.0,340.0 387.5,340.0 388.0,339.2 388.5,338.4 389.0,339.3 389.5,338.6 390.0,337.8 390.5,338.6 391.0,339.4 391.5,339.9 392.0,339.5 392.5,338.5 393.0,339.5 393.5,340.3 394.0,339.4 394.5,339.7 395.0,339.7 395.5,338.6 396.0,337.2 396.5,335.8 397.0,337.2 397.5,338.6 398.0,339.2 398.5,339.7 399.0,339.3 399.5,339.6 400.0,338.6 400.5,337.2 401.0,335.8 401.5,337.2 402.0,338.6 402.5,339.2 403.0,340.0 403.5,339.0 404.0,340.0 404.5,340.2 405.0,340.0 405.5,338.8 406.0,339.8 406.5,340.0 407.0,338.6 407.5,337.2 408.0,335.8 408.5,337.2 409.0,338.6 409.5,339.4 410.0,339.1 410.5,339.9 411.0,339.8 411.5,340.0 412.0,338.8 412.5,338.8 413.0,337.8 413.5,336.4 414.0,336.6 414.5,338.1 415.0,339.5 415.5,339.2 416.0,340.3 416.5,340.0 417.0,338.8 417.5,337.6 418.0,336.3 418.5,337.6 419.0,338.1 419.5,336.2 420.0,334.3 420.5,336.2 421.0,337.3 421.5,334.8 422.0,332.3 422.5,334.8 423.0,337.3 423.5,336.9 424.0,335.3 424.5,336.9 425.0,338.4 425.5,340.0 426.0,337.5 426.5,339.9 427.0,339.9 427.5,340.0 428.0,338.6 428.5,337.2 429.0,335.8 429.5,337.2 430.0,338.6 430.5,339.3 431.0,339.4 431.5,340.2 432.0,339.7 432.5,339.4 433.0,339.9 433.5,338.6 434.0,339.2 434.5,338.2 435.0,337.3 435.5,338.2 436.0,339.2 436.5,340.1 437.0,338.8 437.5,337.6 438.0,336.3 438.5,337.6 439.0,338.8 439.5,339.6 440.0,337.3 440.5,334.8 441.0,332.3 441.5,334.8 442.0,337.3 442.5,338.2 443.0,337.3 443.5,338.2 444.0,339.2 444.5,338.1 445.0,339.6 445.5,339.7 446.0,340.2 446.5,338.2 447.0,339.6 447.5,340.0 448.0,339.5 448.5,339.2 449.0,340.1 449.5,338.4 450.0,336.6 450.5,334.7 451.0,335.8 451.5,337.7 452.0,339.5 452.5,339.2 453.0,339.1 453.5,340.0 454.0,339.1 454.5,340.0 455.0,339.2 455.5,338.2 456.0,337.3 456.5,338.2 457.0,339.2 457.5,338.4 458.0,337.2 458.5,335.8 459.0,337.2 459.5,338.6 460.0,339.0 460.5,338.6 461.0,340.3 461.5,339.3 462.0,338.9 462.5,339.7 463.0,339.0 463.5,337.9 464.0,336.8 464.5,337.9 465.0,339.0 465.5,339.2 466.0,339.6 466.5,338.9 467.0,338.3 467.5,338.9 468.0,339.4 468.5,340.0 469.0,340.1"/>
</svg>
<span class="t" style="top:237.49px;font-size:11px;line-height:15px;color:#000;right:607.90px;text-align:right;letter-spacing:-0.3px;letter-spacing:0.1px;">10</span>
<span class="t" style="top:210.49px;font-size:11px;line-height:15px;color:#000;right:607.90px;text-align:right;letter-spacing:-0.3px;letter-spacing:0.1px;">20</span>
<span class="t" style="top:184.49px;font-size:11px;line-height:15px;color:#000;right:607.90px;text-align:right;letter-spacing:-0.3px;letter-spacing:0.1px;">30</span>
<span class="t" style="top:157.49px;font-size:11px;line-height:15px;color:#000;right:607.90px;text-align:right;letter-spacing:-0.3px;letter-spacing:0.1px;">40</span>
<span class="t" style="top:130.49px;font-size:11px;line-height:15px;color:#000;right:607.90px;text-align:right;letter-spacing:-0.3px;letter-spacing:0.1px;">50</span>
<span class="t" style="top:399.49px;font-size:11px;line-height:15px;color:#000;right:607.90px;text-align:right;letter-spacing:-0.3px;letter-spacing:0.1px;">2</span>
<span class="t" style="top:372.49px;font-size:11px;line-height:15px;color:#000;right:607.90px;text-align:right;letter-spacing:-0.3px;letter-spacing:0.1px;">4</span>
<span class="t" style="top:346.49px;font-size:11px;line-height:15px;color:#000;right:607.90px;text-align:right;letter-spacing:-0.3px;letter-spacing:0.1px;">6</span>
<span class="t" style="top:319.49px;font-size:11px;line-height:15px;color:#000;right:607.90px;text-align:right;letter-spacing:-0.3px;letter-spacing:0.1px;">8</span>
<span class="t" style="top:292.49px;font-size:11px;line-height:15px;color:#000;right:607.90px;text-align:right;letter-spacing:-0.3px;letter-spacing:0.1px;">10</span>
<span class="t" style="top:244.49px;font-size:11px;line-height:15px;color:#000;left:473.70px;letter-spacing:-0.3px;letter-spacing:0.1px;">8</span>
<span class="t" style="top:225.49px;font-size:11px;line-height:15px;color:#000;left:473.70px;letter-spacing:-0.3px;letter-spacing:0.1px;">16</span>
<span class="t" style="top:206.49px;font-size:11px;line-height:15px;color:#000;left:473.70px;letter-spacing:-0.3px;letter-spacing:0.1px;">24</span>
<span class="t" style="top:187.49px;font-size:11px;line-height:15px;color:#000;left:473.70px;letter-spacing:-0.3px;letter-spacing:0.1px;">32</span>
<span class="t" style="top:168.49px;font-size:11px;line-height:15px;color:#000;left:473.70px;letter-spacing:-0.3px;letter-spacing:0.1px;">40</span>
<span class="t" style="top:149.49px;font-size:11px;line-height:15px;color:#000;left:473.70px;letter-spacing:-0.3px;letter-spacing:0.1px;">48</span>
<span class="t" style="top:130.49px;font-size:11px;line-height:15px;color:#000;left:473.70px;letter-spacing:-0.3px;letter-spacing:0.1px;">56</span>
<span class="t" style="top:399.49px;font-size:11px;line-height:15px;color:#000;left:473.70px;letter-spacing:-0.3px;letter-spacing:0.1px;">2</span>
<span class="t" style="top:372.49px;font-size:11px;line-height:15px;color:#000;left:473.70px;letter-spacing:-0.3px;letter-spacing:0.1px;">4</span>
<span class="t" style="top:346.49px;font-size:11px;line-height:15px;color:#000;left:473.70px;letter-spacing:-0.3px;letter-spacing:0.1px;">6</span>
<span class="t" style="top:319.49px;font-size:11px;line-height:15px;color:#000;left:473.70px;letter-spacing:-0.3px;letter-spacing:0.1px;">8</span>
<span class="t" style="top:292.49px;font-size:11px;line-height:15px;color:#000;left:473.70px;letter-spacing:-0.3px;letter-spacing:0.1px;">10</span>
<span class="t" style="top:274.89px;font-size:11px;line-height:15px;color:#000;left:52.80px;letter-spacing:-0.3px;">0</span>
<span class="t" style="top:274.89px;font-size:11px;line-height:15px;color:#000;left:101.25px;letter-spacing:-0.3px;">10</span>
<span class="t" style="top:274.89px;font-size:11px;line-height:15px;color:#000;left:153.50px;letter-spacing:-0.3px;">20</span>
<span class="t" style="top:274.89px;font-size:11px;line-height:15px;color:#000;left:205.75px;letter-spacing:-0.3px;">30</span>
<span class="t" style="top:274.89px;font-size:11px;line-height:15px;color:#000;left:258.00px;letter-spacing:-0.3px;">40</span>
<span class="t" style="top:274.89px;font-size:11px;line-height:15px;color:#000;left:310.25px;letter-spacing:-0.3px;">50</span>
<span class="t" style="top:274.89px;font-size:11px;line-height:15px;color:#000;left:362.50px;letter-spacing:-0.3px;">60</span>
<span class="t" style="top:274.89px;font-size:11px;line-height:15px;color:#000;left:414.75px;letter-spacing:-0.3px;">70</span>
<span class="t" style="top:274.89px;font-size:11px;line-height:15px;color:#000;left:467.00px;letter-spacing:-0.3px;">80</span>
<span class="t" style="top:436.69px;font-size:11px;line-height:15px;color:#000;left:52.80px;letter-spacing:-0.3px;">0</span>
<span class="t" style="top:436.69px;font-size:11px;line-height:15px;color:#000;left:101.25px;letter-spacing:-0.3px;">10</span>
<span class="t" style="top:436.69px;font-size:11px;line-height:15px;color:#000;left:153.50px;letter-spacing:-0.3px;">20</span>
<span class="t" style="top:436.69px;font-size:11px;line-height:15px;color:#000;left:205.75px;letter-spacing:-0.3px;">30</span>
<span class="t" style="top:436.69px;font-size:11px;line-height:15px;color:#000;left:258.00px;letter-spacing:-0.3px;">40</span>
<span class="t" style="top:436.69px;font-size:11px;line-height:15px;color:#000;left:310.25px;letter-spacing:-0.3px;">50</span>
<span class="t" style="top:436.69px;font-size:11px;line-height:15px;color:#000;left:362.50px;letter-spacing:-0.3px;">60</span>
<span class="t" style="top:436.69px;font-size:11px;line-height:15px;color:#000;left:414.75px;letter-spacing:-0.3px;">70</span>
<span class="t" style="top:436.69px;font-size:11px;line-height:15px;color:#000;left:467.00px;letter-spacing:-0.3px;">80</span>
<div class="abs" style="left:495px;top:133px;width:141px;height:83px;border:1px solid #d5dfe5;border-radius:4px;box-sizing:border-box;"></div>
<div class="abs" style="left:502px;top:132px;width:44px;height:3px;background:#fff;"></div>
<span class="t" style="top:125.29px;font-size:11px;line-height:15px;color:#000;letter-spacing:-0.197px;left:503.70px;">Disc info</span>
<span class="t" style="top:140.49px;font-size:11px;line-height:15px;color:#000;letter-spacing:0.200px;left:502.80px;">Type:</span>
<span class="t" style="top:140.49px;font-size:11px;line-height:15px;color:#1c1c8c;letter-spacing:-0.196px;left:548.80px;">Data CD</span>
<span class="t" style="top:157.49px;font-size:11px;line-height:15px;color:#000;letter-spacing:-0.228px;left:502.80px;">ID:</span>
<span class="t" style="top:157.49px;font-size:11px;line-height:15px;color:#1c1c8c;letter-spacing:0.017px;left:548.80px;">Taiyo Yuden</span>
<span class="t" style="top:175.19px;font-size:11px;line-height:15px;color:#000;letter-spacing:-0.098px;left:502.80px;">Date:</span>
<span class="t" style="top:175.19px;font-size:11px;line-height:15px;color:#1c1c8c;letter-spacing:-0.116px;left:548.80px;">31 Mar 2017</span>
<span class="t" style="top:193.19px;font-size:11px;line-height:15px;color:#000;letter-spacing:-0.234px;left:502.80px;">Label:</span>
<span class="t" style="top:193.19px;font-size:11px;line-height:15px;color:#1c1c8c;letter-spacing:0.937px;left:548.80px;">-</span>
<div class="abs" style="left:495px;top:224px;width:141px;height:203px;border:1px solid #d5dfe5;border-radius:4px;box-sizing:border-box;"></div>
<div class="abs" style="left:502px;top:223px;width:42px;height:3px;background:#fff;"></div>
<span class="t" style="top:216.49px;font-size:11px;line-height:15px;color:#000;letter-spacing:-0.192px;left:503.70px;">Settings</span>
<div class="btn" style="left:504px;top:233px;width:84px;height:21px;"></div>
<span class="t" style="top:236.59px;font-size:11px;line-height:15px;color:#000;letter-spacing:0.058px;left:507.70px;">24 X</span>
<svg class="abs" style="left:576px;top:242px" width="8" height="5"><path d="M0 0 L7.6 0 L3.8 4.2 Z" fill="#000"/></svg>
<div class="btn" style="left:597px;top:233px;width:21px;height:21px;background:linear-gradient(180deg,#f8f8f8,#ececec);"></div>
<svg class="abs" style="left:597px;top:233px" width="21" height="21" viewBox="597 233 21 21">
<rect x="600.5" y="235.5" width="13" height="15" fill="#fff" stroke="#000" stroke-width="1"/>
<path d="M603.4 242.6 V240.4 Q603.4 239.4 604.4 239.4 H606.6" fill="none" stroke="#008a00" stroke-width="1.1"/>
<path d="M606.2 236.8 L609.4 239.4 L606.2 242 Z" fill="#008a00"/>
<path d="M610.8 243.2 V245.6 Q610.8 246.6 609.8 246.6 H607.6" fill="none" stroke="#008a00" stroke-width="1.1"/>
<path d="M608 244 L604.8 246.6 L608 249.2 Z" fill="#008a00"/>
</svg>
<span class="t" style="top:263.69px;font-size:11px;line-height:15px;color:#000;letter-spacing:-0.257px;left:505.90px;">Start:</span>
<span class="t" style="top:286.39px;font-size:11px;line-height:15px;color:#000;letter-spacing:-0.309px;left:505.90px;">End:</span>
<div class="inp" style="left:558px;top:259px;width:60px;height:20px;"></div>
<div class="inp" style="left:558px;top:282px;width:60px;height:20px;"></div>
<span class="t" style="top:261.89px;font-size:11px;line-height:15px;color:#000;letter-spacing:-0.041px;left:560.60px;">000:00.00</span>
<span class="t" style="top:284.49px;font-size:11px;line-height:15px;color:#000;letter-spacing:-0.041px;left:560.60px;">079:57.70</span>
<div class="cb" style="left:506px;top:304px;"></div>
<span class="t" style="top:303.09px;font-size:11px;line-height:15px;color:#000;letter-spacing:-0.056px;left:521.50px;">Quick scan</span>
<div class="cb" style="left:506px;top:322px;"></div>
<svg class="abs" style="left:508px;top:324px" width="10" height="9" viewBox="0 0 10 9"><path d="M1.2 4.2 L3.8 7.4 L8.3 0.8" fill="none" stroke="#35468e" stroke-width="1.7"/></svg>
<span class="t" style="top:321.39px;font-size:11px;line-height:15px;color:#000;letter-spacing:-0.002px;left:521.50px;">Show C1/PIE</span>
<div class="cb" style="left:506px;top:337px;"></div>
<svg class="abs" style="left:508px;top:339px" width="10" height="9" viewBox="0 0 10 9"><path d="M1.2 4.2 L3.8 7.4 L8.3 0.8" fill="none" stroke="#35468e" stroke-width="1.7"/></svg>
<span class="t" style="top:336.49px;font-size:11px;line-height:15px;color:#000;letter-spacing:-0.020px;left:521.50px;">Show C2/PIF</span>
<div class="cb" style="left:506px;top:353px;"></div>
<svg class="abs" style="left:508px;top:355px" width="10" height="9" viewBox="0 0 10 9"><path d="M1.2 4.2 L3.8 7.4 L8.3 0.8" fill="none" stroke="#35468e" stroke-width="1.7"/></svg>
<span class="t" style="top:351.99px;font-size:11px;line-height:15px;color:#000;letter-spacing:-0.125px;left:521.50px;">Show jitter</span>
<div class="cb" style="left:506px;top:369px;"></div>
<svg class="abs" style="left:508px;top:371px" width="10" height="9" viewBox="0 0 10 9"><path d="M1.2 4.2 L3.8 7.4 L8.3 0.8" fill="none" stroke="#35468e" stroke-width="1.7"/></svg>
<span class="t" style="top:368.29px;font-size:11px;line-height:15px;color:#000;letter-spacing:-0.172px;left:521.50px;">Show read speed</span>
<div class="cb dis" style="left:506px;top:384px;"></div>
<svg class="abs" style="left:508px;top:386px" width="10" height="9" viewBox="0 0 10 9"><path d="M1.2 4.2 L3.8 7.4 L8.3 0.8" fill="none" stroke="#b4b4b4" stroke-width="1.7"/></svg>
<span class="t" style="top:383.09px;font-size:11px;line-height:15px;color:#8c8c8c;letter-spacing:-0.195px;left:521.50px;">Show write speed</span>
<div class="btn" style="left:532px;top:402px;width:96px;height:21px;"></div>
<span class="t" style="top:405.39px;font-size:11px;line-height:15px;color:#000;letter-spacing:-0.017px;left:554.80px;">Advanced</span>
<div class="abs" style="left:495px;top:433px;width:141px;height:26px;border:1px solid #d5dfe5;border-radius:4px;box-sizing:border-box;"></div>
<span class="t" style="top:439.09px;font-size:11px;line-height:15px;color:#000;letter-spacing:-0.311px;left:505.50px;">Quality score:</span>
<span class="t" style="top:439.09px;font-size:11px;line-height:15px;color:#1c1c8c;letter-spacing:0.366px;left:611.70px;">96</span>
<div class="abs" style="left:495px;top:465px;width:141px;height:56px;border:1px solid #d5dfe5;border-radius:4px;box-sizing:border-box;"></div>
<span class="t" style="top:473.19px;font-size:11px;line-height:15px;color:#000;letter-spacing:-0.446px;left:505.90px;">Progress:</span>
<span class="t" style="top:473.19px;font-size:11px;line-height:15px;color:#1c1c8c;letter-spacing:-0.772px;left:596.60px;">100 %</span>
<span class="t" style="top:488.79px;font-size:11px;line-height:15px;color:#000;letter-spacing:-0.249px;left:505.90px;">Position:</span>
<span class="t" style="top:488.79px;font-size:11px;line-height:15px;color:#1c1c8c;letter-spacing:-0.202px;left:583.30px;">79:55.00</span>
<span class="t" style="top:504.09px;font-size:11px;line-height:15px;color:#000;letter-spacing:-0.272px;left:505.90px;">Speed:</span>
<span class="t" style="top:504.09px;font-size:11px;line-height:15px;color:#1c1c8c;letter-spacing:-0.153px;left:587.70px;">27.01 X</span>
<div class="abs" style="left:18px;top:465px;width:147px;height:57px;border:1px solid #a0a0a0;box-sizing:border-box;"></div>
<div class="abs" style="left:26px;top:464px;width:55.400000000000006px;height:3px;background:#fff;"></div>
<div class="abs" style="left:27.5px;top:462px;width:9px;height:9px;background:#00f0f0;border:1px solid #000;box-sizing:border-box;"></div>
<span class="t" style="top:458.39px;font-size:11px;line-height:15px;color:#000;letter-spacing:-0.482px;left:38.10px;">C1 Errors</span>
<span class="t" style="top:474.19px;font-size:11px;line-height:15px;color:#000;letter-spacing:-0.104px;left:25.70px;">Average:</span>
<span class="t" style="top:474.19px;font-size:11px;line-height:15px;color:#1c1c8c;letter-spacing:0.131px;left:132.80px;">0.59</span>
<span class="t" style="top:489.39px;font-size:11px;line-height:15px;color:#000;letter-spacing:-0.460px;left:25.70px;">Maximum:</span>
<span class="t" style="top:489.39px;font-size:11px;line-height:15px;color:#1c1c8c;letter-spacing:0.266px;left:142.10px;">23</span>
<span class="t" style="top:504.39px;font-size:11px;line-height:15px;color:#000;letter-spacing:0.182px;left:25.70px;">Total:</span>
<span class="t" style="top:504.39px;font-size:11px;line-height:15px;color:#1c1c8c;letter-spacing:0.111px;left:129.80px;">2844</span>
<div class="abs" style="left:176px;top:465px;width:147px;height:57px;border:1px solid #a0a0a0;box-sizing:border-box;"></div>
<div class="abs" style="left:184px;top:464px;width:55.900000000000006px;height:3px;background:#fff;"></div>
<div class="abs" style="left:185.5px;top:462px;width:9px;height:9px;background:#f0f000;border:1px solid #000;box-sizing:border-box;"></div>
<span class="t" style="top:458.39px;font-size:11px;line-height:15px;color:#000;letter-spacing:-0.420px;left:196.10px;">C2 Errors</span>
<span class="t" style="top:474.19px;font-size:11px;line-height:15px;color:#000;letter-spacing:-0.132px;left:184.60px;">Average:</span>
<span class="t" style="top:474.19px;font-size:11px;line-height:15px;color:#1c1c8c;letter-spacing:0.164px;left:291.40px;">0.00</span>
<span class="t" style="top:489.39px;font-size:11px;line-height:15px;color:#000;letter-spacing:-0.517px;left:184.60px;">Maximum:</span>
<span class="t" style="top:489.39px;font-size:11px;line-height:15px;color:#1c1c8c;letter-spacing:0.483px;left:306.70px;">0</span>
<span class="t" style="top:504.39px;font-size:11px;line-height:15px;color:#000;letter-spacing:0.142px;left:184.60px;">Total:</span>
<span class="t" style="top:504.39px;font-size:11px;line-height:15px;color:#1c1c8c;letter-spacing:0.483px;left:306.70px;">0</span>
<div class="abs" style="left:335px;top:465px;width:148px;height:43px;border:1px solid #a0a0a0;box-sizing:border-box;"></div>
<div class="abs" style="left:343px;top:464px;width:34.80000000000001px;height:3px;background:#fff;"></div>
<div class="abs" style="left:344.5px;top:462px;width:9px;height:9px;background:#f000f0;border:1px solid #000;box-sizing:border-box;"></div>
<span class="t" style="top:458.39px;font-size:11px;line-height:15px;color:#000;letter-spacing:-0.347px;left:355.60px;">Jitter</span>
<span class="t" style="top:474.19px;font-size:11px;line-height:15px;color:#000;letter-spacing:-0.089px;left:343.60px;">Average:</span>
<span class="t" style="top:474.19px;font-size:11px;line-height:15px;color:#1c1c8c;letter-spacing:-0.469px;left:440.20px;">7.18 %</span>
<span class="t" style="top:489.39px;font-size:11px;line-height:15px;color:#000;letter-spacing:-0.560px;left:343.60px;">Maximum:</span>
<span class="t" style="top:489.39px;font-size:11px;line-height:15px;color:#1c1c8c;letter-spacing:-0.157px;left:444.60px;">8.3 %</span>
</div>
</body></html>
